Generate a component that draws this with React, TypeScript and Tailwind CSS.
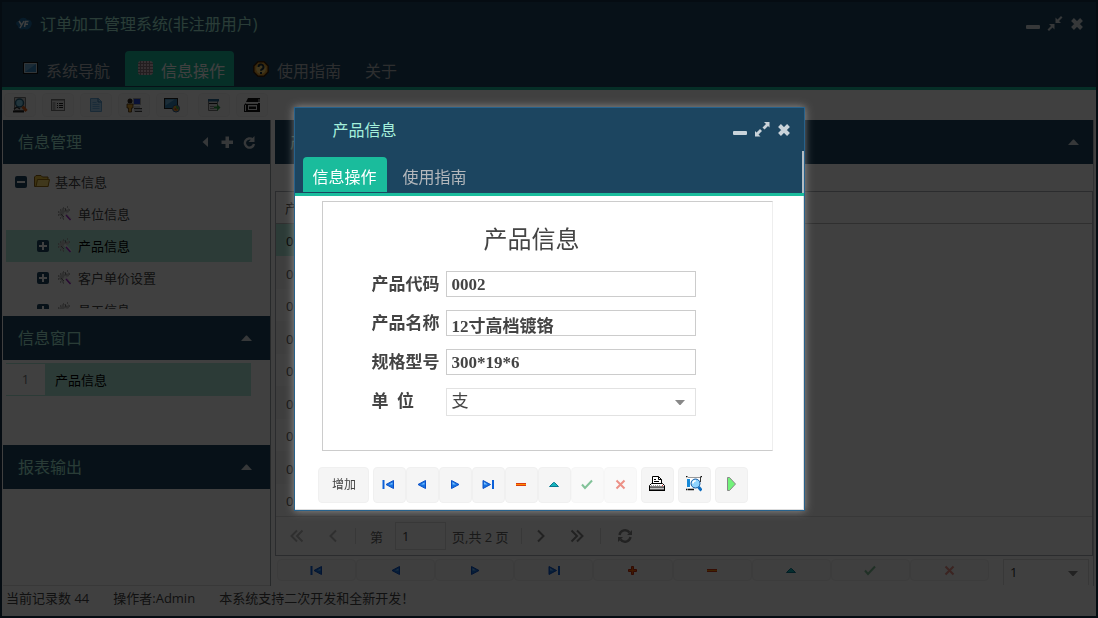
import { useState, type ReactNode } from "react";
import clsx from "clsx";

interface IconProps {
  className?: string;
}

function Svg({ size = 16, className, children }: { size?: number; className?: string; children: ReactNode }) {
  return (
    <svg width={size} height={size} viewBox={`0 0 ${size} ${size}`} fill="none" className={clsx("shrink-0", className)} aria-hidden="true">
      {children}
    </svg>
  );
}

// window controls

const MinusBar = () => (
  <Svg>
    <rect x="1" y="9" width="14" height="4" rx="1" fill="currentColor" />
  </Svg>
);

const Expand = () => (
  <Svg>
    <path d="M10 0h5.500v5.500l-1.500-1.500-3.500 3.500-2-2L12 2zM1 14.500V9l1.500 1.500L6 7l2 2-3.500 3.500L6.500 14.500z" fill="currentColor" />
  </Svg>
);

const Compress = () => (
  <Svg>
    <path d="M8.500 7V1.500L10.500 3.500 14 0l1.500 1.500L12 5l2 2zM7.500 8v5.500L5.500 11.500 2 15 .5 13.500 4 10 2 8z" fill="currentColor" />
  </Svg>
);

const Close = () => (
  <Svg>
    <path d="M3.500 3.500l9 9M12.500 3.500l-9 9" stroke="currentColor" strokeWidth="4" />
  </Svg>
);

const TriangleUp = ({ className }: IconProps) => (
  <svg width="11" height="6" viewBox="0 0 11 6" className={className} aria-hidden="true">
    <path d="M0 6L5 0.5h1L11 6z" fill="currentColor" />
  </svg>
);

const TriangleDown = ({ className }: IconProps) => (
  <svg width="10" height="5" viewBox="0 0 10 5" className={className} aria-hidden="true">
    <path d="M0 0h10L5.500 5h-1z" fill="currentColor" />
  </svg>
);

const TriangleLeft = () => (
  <Svg size={14}>
    <path d="M10 2v10L4.500 7z" fill="currentColor" />
  </Svg>
);

const BoldPlus = () => (
  <Svg size={14}>
    <path d="M5.500 1.500h3.500v4h4v3.500h-4v4H5.500V9h-4V5.500h4z" fill="currentColor" />
  </Svg>
);

const Reload = () => (
  <Svg size={14}>
    <path d="M10.500 4.500A4.600 4.600 0 1 0 12 9" stroke="currentColor" strokeWidth="2.400" />
    <path d="M12.500 1v6h-6z" fill="currentColor" />
  </Svg>
);

const Refresh = () => (
  <Svg>
    <path d="M2.500 7A5.600 5.600 0 0 1 12.500 4.500M13.500 9A5.600 5.600 0 0 1 3.500 11.500" stroke="currentColor" strokeWidth="2.400" />
    <path d="M15 2v5h-5zM1 14V9h5z" fill="currentColor" />
  </Svg>
);

// record navigation

const First = () => (
  <Svg>
    <path d="M12.500 4.500v8L5 8.500z" fill="#1673e0" stroke="#0c50c8" />
    <path d="M1.500 4h2v9h-2z" fill="#0c60d8" />
    <path d="M11.500 6.500v2H8z" fill="#7cc0ff" />
  </Svg>
);

const Prev = () => (
  <Svg>
    <path d="M11.500 4.500v8L4 8.500z" fill="#1673e0" stroke="#0c50c8" />
    <path d="M10.500 6.500v2H7z" fill="#7cc0ff" />
  </Svg>
);

const Next = () => (
  <Svg>
    <path d="M4.500 4.500v8l7.500-4z" fill="#1673e0" stroke="#0c50c8" />
    <path d="M5.500 6v2.500H9z" fill="#7cc0ff" />
  </Svg>
);

const Last = () => (
  <Svg>
    <path d="M3 4.500v8l7.500-4z" fill="#1673e0" stroke="#0c50c8" />
    <path d="M4 6v2.500h3.500z" fill="#7cc0ff" />
    <path d="M12 4h2v9h-2z" fill="#0c60d8" />
  </Svg>
);

const Add = () => (
  <Svg>
    <path d="M6.500 4.500h2v3h3v2h-3v3h-2v-3h-3v-2h3z" fill="#ff6a00" stroke="#c8290c" />
  </Svg>
);

const Remove = () => (
  <Svg>
    <path d="M3 7h10v3H3z" fill="#d83a10" />
    <path d="M3 8h10v1H3z" fill="#ff8a00" />
  </Svg>
);

const Edit = () => (
  <Svg>
    <path d="M3.500 10.500L7.500 6.500h1l4 4z" fill="#16b4bc" stroke="#0a7890" />
  </Svg>
);

const Check = () => (
  <Svg>
    <path d="M3 8.500l3 3.500 7-7.500" stroke="#2f9a55" strokeWidth="2" />
  </Svg>
);

const Cross = () => (
  <Svg>
    <path d="M4.500 4.500l8 8M12.500 4.500l-8 8" stroke="#e04838" strokeWidth="2" />
  </Svg>
);

const Print = ({ className }: IconProps) => (
  <Svg className={className}>
    <path d="M3.500 7V.5h6l3 3V7" fill="#fff" stroke="#000" />
    <path d="M9.500.5v3h3M5 3.500h2M5 5.500h5" stroke="#000" />
    <path d="M2.500 7.500h11l2 2v1.500H.5V9.500z" fill="#fff" stroke="#000" />
    <path d="M0 11h16v4H0z" fill="#000" />
    <path d="M1 12.500h14" stroke="#c4c4c4" strokeWidth="2" />
    <path d="M2 9.500h10" stroke="#999" strokeDasharray="1 1" />
    <path d="M13 9.500h1" stroke="#e33" />
  </Svg>
);

const Preview = ({ className }: IconProps) => (
  <Svg className={className}>
    <path d="M2 1h12v11H2z" fill="#fff" />
    <path d="M2 1h12v1H2z" fill="#999" />
    <path d="M0 .5h1.500M14.500.5H16M0 13.500h1.500M2 13.500h6" stroke="#111" strokeWidth="1.500" />
    <path d="M14.500 1v5" stroke="#333" />
    <path d="M1 3h3v8H1z" fill="#178ad8" />
    <circle cx="9.500" cy="7.500" r="4.500" fill="#8fd4ff" stroke="#1458a0" />
    <path d="M6.800 7.500a3 3 0 0 1 3-2.700" stroke="#fff" strokeWidth="1.600" />
    <path d="M12.500 11l3 3.500" stroke="#0b6cc0" strokeWidth="3" />
  </Svg>
);

const Run = () => (
  <Svg>
    <path d="M4.500 1.500h2l6 6.500-6 6.500h-2z" fill="#72f27a" stroke="#888" />
  </Svg>
);

// toolbar and menu

const Logo = () => (
  <Svg>
    <path d="M2 10c-3-2-2-5 1-5 1-4 7-4 8-1 4-1 6 3 4 6-1 3-4 4-7 3-3 1-6 0-6-3z" fill="#1f6ca4" />
    <path d="M3 5l2.500 4M8 5l-4 7M8.500 11l1-5.500h3M9 8.300h3" stroke="#f2f5f8" strokeWidth="1.500" />
  </Svg>
);

const Monitor = () => (
  <Svg size={15}>
    <rect x="0.500" y="1.500" width="14" height="11" fill="#3a8ac6" stroke="#111" />
    <path d="M2 3h11L2 11z" fill="#6fb0dc" />
    <path d="M1.500 2.500h12v9h-12z" stroke="#c8d8e0" />
  </Svg>
);

const Grid = () => (
  <Svg size={15}>
    <rect width="15" height="14" rx="3" fill="#d8c0c8" />
    <path d="M2.500 0v14M5.500 0v14M8.500 0v14M11.500 0v14M0 2.500h15M0 5.500h15M0 8.500h15M0 11.500h15" stroke="#8a7a80" />
  </Svg>
);

const Help = () => (
  <Svg>
    <path d="M5 .8h6l4.200 4.200v6L11 15.200H5L.8 11V5z" fill="#e8a430" stroke="#38200c" strokeWidth="1.500" />
    <circle cx="8" cy="8" r="4.800" fill="#ffdc78" />
    <path d="M5.500 6a2.500 2.500 0 1 1 3.500 2.300q-1 .4-1 1.400M8 11v2" stroke="#18303c" strokeWidth="2" />
  </Svg>
);

const Find = () => (
  <Svg>
    <path d="M2.500.5h11v13h-11z" fill="#ccc" stroke="#777" />
    <path d="M1 14.500h11" stroke="#222" strokeWidth="2" />
    <path d="M2 12l3-2 3 2" stroke="#333" strokeWidth="1.500" />
    <circle cx="7.500" cy="6" r="4" fill="#88d4ee" stroke="#24607c" strokeWidth="1.500" />
    <path d="M10.500 9.500l4 4.500" stroke="#d85c18" strokeWidth="3" />
  </Svg>
);

const Form = () => (
  <Svg>
    <rect x="1.500" y="2.500" width="13" height="11" fill="#e8e8e8" stroke="#777" />
    <path d="M2 3.500h12" stroke="#aaa" />
    <path d="M4 5v8" stroke="#aaa" strokeWidth="3" />
    <path d="M7 6.500h1M7 8.500h1M7 10.500h1M9 6.500h4M9 8.500h4M9 10.500h4" stroke="#222" />
  </Svg>
);

const Page = () => (
  <Svg>
    <path d="M2.500 1.500h8l3 3v10h-11z" fill="#a4d4f8" stroke="#6aa8d8" />
    <path d="M10 1.500V5h3.500" stroke="#3878b0" />
    <path d="M4.500 5.500h4M4.500 7.500h7M4.500 9.500h7M4.500 11.500h7" stroke="#6cb0e4" />
  </Svg>
);

const Users = () => (
  <Svg>
    <path d="M7.500 1.500h7v6h-7z" fill="#2443d8" stroke="#aaa" />
    <path d="M8 9h6v2H8zM8 12h8v3H8z" fill="#c8ccd4" />
    <path d="M8 11.500h8M9 14.500h7" stroke="#444" />
    <circle cx="4" cy="4" r="2.500" fill="#2e2620" />
    <path d="M1 7h6v4H5.500v4h-3v-4H1z" fill="#e8a832" stroke="#50300c" strokeWidth=".8" />
  </Svg>
);

const Web = () => (
  <Svg>
    <rect x="0.500" y="1.500" width="13" height="10" fill="#3484b8" stroke="#222" />
    <path d="M1.500 2.500h9l-9 6z" fill="#70b4dc" />
    <circle cx="12" cy="11.500" r="3.500" fill="#d8a030" stroke="#245aa0" />
    <path d="M12 8.500a3 3 0 0 1 2.500 4l-2-1z" fill="#38a84c" />
    <path d="M10 12l2-1 1 3z" fill="#cc3838" />
  </Svg>
);

const Export = () => (
  <Svg>
    <path d="M2.500 2.500h9v11h-9z" fill="#e4e4e4" stroke="#777" />
    <path d="M2 2h11v2.500H2z" fill="#2b6a94" />
    <path d="M3 6.500h8" stroke="#222" />
    <path d="M4 9.500h4M4 11.500h4" stroke="#888" />
    <path d="M8 9.500h3V7l3.500 3.500L11 14v-2.500H8z" fill="#2c9a42" />
  </Svg>
);

const Printer = () => (
  <Svg>
    <path d="M4 1h12v4H2z" fill="#111" />
    <path d="M2 6h14v9H0V8z" fill="#111" />
    <path d="M2 6.500h12M1.500 8v6M15 2v3" stroke="#ddd" />
    <path d="M4 8h9v5H4z" fill="#eee" />
    <path d="M5 9.500h7V12H5z" fill="#111" />
  </Svg>
);

const Folder = () => (
  <Svg>
    <path d="M.5 12.500V3L2 1.500h5L8.500 3H14v9.500z" fill="#f2c840" stroke="#8a6010" />
    <path d="M3.500 5.500h12l-1.500 7H2z" fill="#ffe070" stroke="#9a7010" />
  </Svg>
);

const Gear = () => (
  <Svg>
    <path d="M7 3l1 2 1-2 1 1 2-2v4l-2 1-2-1-2 3 1 3-2 1-1-3-3-1 2-2-2-1 3-1 1-3z" fill="#c4c4c4" />
    <path d="M1 6h1M3 4h1M6 2h1M10 1h1M12 4h1M1 9h1M3 12h1M6 13h1" stroke="#999" strokeWidth="1.500" />
    <path d="M4 8l3 3M8 2l1 3" stroke="#777" />
    <path d="M7.500 6.500l6.500 7" stroke="#eee" strokeWidth="2.500" />
    <path d="M9 9l4.500 5" stroke="#a028c8" strokeWidth="1.500" />
  </Svg>
);

const Toggle = ({ open }: { open?: boolean }) => (
  <Svg size={12}>
    <rect width="12" height="12" rx="2" fill="#1c4560" />
    <path d={open ? "M2 6h8" : "M2 6h8M6 2v8"} stroke="#fff" strokeWidth="2" />
  </Svg>
);

const Chevron = ({ double, back }: { double?: boolean; back?: boolean }) => (
  <Svg size={14} className={back ? "rotate-180" : undefined}>
    <path d={double ? "M1.500 1.500L7 7l-5.500 5.500M7 1.500L12.500 7 7 12.500" : "M4 1.500L9.500 7 4 12.500"} stroke="currentColor" strokeWidth="2" />
  </Svg>
);

const menuTabs = [
  { label: "系统导航", icon: <Monitor /> },
  { label: "信息操作", icon: <Grid /> },
  { label: "使用指南", icon: <Help /> },
  { label: "关于" },
];

const tools = [
  { name: "查找", icon: <Find /> },
  { name: "表单", icon: <Form /> },
  { name: "文档", icon: <Page /> },
  { name: "用户", icon: <Users /> },
  { name: "网络", icon: <Web /> },
  { name: "导出", icon: <Export /> },
  { name: "打印", icon: <Printer /> },
];

const treeItems = [
  { label: "单位信息", leaf: true },
  { label: "产品信息" },
  { label: "客户单价设置" },
  { label: "员工信息" },
];

const codes = ["0002", "0003", "0004", "0005", "0006", "0007", "0008", "0009", "0010"];

const gridNav = [
  { name: "首条", icon: <First /> },
  { name: "上一条", icon: <Prev /> },
  { name: "下一条", icon: <Next /> },
  { name: "末条", icon: <Last /> },
  { name: "增加", icon: <Add /> },
  { name: "删除", icon: <Remove /> },
  { name: "编辑", icon: <Edit /> },
  { name: "保存", icon: <Check />, disabled: true },
  { name: "取消", icon: <Cross />, disabled: true },
];

function PanelHeader({ title, children }: { title: string; children: ReactNode }) {
  return (
    <div className="flex h-11 shrink-0 items-center justify-between bg-[#1c4560] pr-3.5 pl-[15px] text-base text-[#a6f0dc]">
      <h2>{title}</h2>
      <div className="flex items-center gap-2 text-[#d5dde2]">{children}</div>
    </div>
  );
}

function Sidebar() {
  const [selected, setSelected] = useState("产品信息");

  return (
    <aside className="flex w-[268px] shrink-0 flex-col border-r border-[#9aa2a8]">
      <PanelHeader title="信息管理">
        <button aria-label="收起"><TriangleLeft /></button>
        <button aria-label="新增"><BoldPlus /></button>
        <button aria-label="刷新"><Reload /></button>
      </PanelHeader>

      <div className="h-[152px] shrink-0 pt-0.5 pr-[18px] pb-[7px] pl-[3px]">
        <ul className="h-full overflow-hidden text-[13px]">
          <li>
            <button className="flex h-8 w-full items-center pl-[9px]">
              <Toggle open />
              <span className="ml-[7px]"><Folder /></span>
              <span className="ml-[5px] pt-0.5">基本信息</span>
            </button>
          </li>
          {treeItems.map((item) => (
            <li key={item.label}>
              <button
                onClick={() => setSelected(item.label)}
                className={clsx(
                  "flex h-8 w-full items-center pl-[31px]",
                  selected === item.label ? "bg-[#b0ecdc] text-black" : "text-[#444]"
                )}
              >
                <span className="w-3">{!item.leaf && <Toggle />}</span>
                <span className="ml-2"><Gear /></span>
                <span className="ml-[5px] pt-0.5">{item.label}</span>
              </button>
            </li>
          ))}
        </ul>
      </div>

      <PanelHeader title="信息窗口">
        <button aria-label="折叠信息窗口" className="mr-1"><TriangleUp /></button>
      </PanelHeader>
      <div className="h-[85px] shrink-0 py-[3px] pr-[19px] pl-[3px]">
        <div className="flex h-[33px] items-center border-y border-[#b0ecdc] text-[13px]">
          <span className="w-[39px] text-center text-[#777]">1</span>
          <button className="h-full flex-1 bg-[#b0ecdc] pt-0.5 pl-2.5 text-left text-black">产品信息</button>
        </div>
      </div>

      <PanelHeader title="报表输出">
        <button aria-label="折叠报表输出" className="mr-1"><TriangleUp /></button>
      </PanelHeader>
      <div className="flex-1 border-b border-[#e0e0e0]" />
    </aside>
  );
}

function Separator() {
  return <span className="block h-4 w-px bg-[#ddd]" />;
}

function ProductGrid() {
  return (
    <main className="ml-1 flex min-w-0 flex-1 flex-col border-r border-[#c4c8cc]">
      <PanelHeader title="产品信息">
        <button aria-label="折叠产品信息"><TriangleUp /></button>
      </PanelHeader>

      <div className="mt-[27px] flex flex-1 flex-col border border-[#aab0b6] text-[13px] text-[#444]">
        <div className="flex h-8 shrink-0 items-center border-b border-[#bbb]">
          <span className="pt-0.5 pl-[9px]">产品代码</span>
        </div>
        <table className="h-[292px] w-[400px]">
          <tbody>
            {codes.map((code, i) => (
              <tr key={code} className={i === 0 ? "bg-[#b0ecdc] text-black" : "even:bg-[#f8f8f8]"}>
                <td className="pt-1 pl-2.5">{code}</td>
              </tr>
            ))}
          </tbody>
        </table>
        <div className="flex flex-1 items-center border-t border-[#ddd] pl-3.5 text-[#888]">
          <button aria-label="第一页" className="text-[#bbb]"><Chevron double back /></button>
          <button aria-label="上一页" className="ml-[22px] text-[#bbb]"><Chevron back /></button>
          <span className="ml-[15px]"><Separator /></span>
          <label htmlFor="page" className="ml-3.5 pt-1 text-[#666]">第</label>
          <input id="page" defaultValue="1" className="ml-3 h-7 w-[51px] border border-[#ddd] px-1.5 text-[#444]" />
          <span className="ml-1.5 pt-1 text-[#666]">页,共 2 页</span>
          <span className="mx-3"><Separator /></span>
          <button aria-label="下一页"><Chevron /></button>
          <button aria-label="最后一页" className="ml-[22px]"><Chevron double /></button>
          <span className="mx-4"><Separator /></span>
          <button aria-label="刷新"><Refresh /></button>
        </div>
      </div>

      <div className="flex h-[30px] shrink-0 items-start pt-[3px] pr-1 pl-[2px]">
        {gridNav.map((b) => (
          <button
            key={b.name}
            aria-label={b.name}
            className="flex h-[22px] flex-1 items-center justify-center rounded border border-[#f0f0f0] bg-[#f9f9f9]"
          >
            <span className={b.disabled ? "opacity-60" : undefined}>{b.icon}</span>
          </button>
        ))}
        <div className="relative ml-3.5 w-[86px]">
          <select aria-label="每页" className="h-[26px] w-full appearance-none border-x border-t border-[#ddd] px-1.5 text-[13px] text-[#333]">
            <option>1</option>
          </select>
          <TriangleDown className="pointer-events-none absolute top-3 right-[11px] text-[#888]" />
        </div>
      </div>
    </main>
  );
}

function ActionButton({ name, disabled, children }: { name: string; disabled?: boolean; children: ReactNode }) {
  return (
    <button
      aria-label={name}
      disabled={disabled}
      className={clsx(
        "flex h-9 w-[33px] items-center justify-center rounded border border-[#f0f0f0] bg-[#f5f5f5] pb-0.5",
        disabled && "opacity-60"
      )}
    >
      {children}
    </button>
  );
}

const fields = [
  { id: "code", label: "产品代码", value: "0002" },
  { id: "name", label: "产品名称", value: "12寸高档镀铬" },
  { id: "spec", label: "规格型号", value: "300*19*6" },
];

function ProductDialog() {
  const [tab, setTab] = useState("信息操作");

  return (
    <div
      role="dialog"
      aria-labelledby="dialog-title"
      className="w-[511px] border border-[#27628c] bg-white shadow-[0_0_8px_rgba(200,200,200,0.6)]"
    >
      <header className="border-b-[3px] border-[#1abc9c] bg-[#1c4560]">
        <div className="flex h-[43px] items-center justify-between pr-[12px] pl-[38px]">
          <h1 id="dialog-title" className="text-base text-[#a6f0dc]">产品信息</h1>
          <div className="flex gap-1.5 text-[#c9d3da]">
            <button aria-label="最小化"><MinusBar /></button>
            <button aria-label="最大化"><Expand /></button>
            <button aria-label="关闭"><Close /></button>
          </div>
        </div>
        <nav className="flex h-[42px] items-end gap-1.5 border-r-2 border-[#b4bcc2] px-2 pb-px text-base">
          {["信息操作", "使用指南"].map((t) => (
            <button
              key={t}
              onClick={() => setTab(t)}
              className={clsx("h-[35px] rounded-t px-2.5 pt-1", tab === t ? "bg-[#1abc9c] text-white" : "text-[#b4b8bc]")}
            >
              {t}
            </button>
          ))}
        </nav>
      </header>

      <div className="border-r border-b border-[#ddd] px-[23px] pt-[5px] pb-[6px]">
        <form className="ml-1 h-[250px] w-[451px] border border-[#ccc] border-r-[#eee] pt-5 pl-[49px] font-['Liberation_Serif','Noto_Sans_CJK_SC',serif] text-[17px] text-[#444]">
          <h2 className="mb-[13px] w-80 text-center text-2xl leading-9">产品信息</h2>
          <div className="flex flex-col gap-[13px]">
            {fields.map((f) => (
              <div key={f.id} className="flex h-[26px] items-center font-bold">
                <label htmlFor={f.id} className="w-[74px] pt-0.5">{f.label}</label>
                <input id={f.id} defaultValue={f.value} className="h-full w-[250px] border border-[#ccc] px-[5px] pt-0.5" />
              </div>
            ))}
            <div className="flex h-7 items-center">
              <label htmlFor="unit" className="w-[74px] font-bold whitespace-pre">单  位</label>
              <div className="relative h-full w-[250px]">
                <select id="unit" className="h-full w-full appearance-none border border-[#e2e2e2] px-[5px]">
                  <option>支</option>
                </select>
                <TriangleDown className="pointer-events-none absolute top-3 right-[11px] text-[#888]" />
              </div>
            </div>
          </div>
        </form>

        <div className="mt-4 flex gap-1">
          <button className="h-9 w-[51px] rounded border border-[#f0f0f0] bg-[#f5f5f5] pl-0.5 text-xs text-[#444]">增加</button>
          <div className="flex">
            <ActionButton name="首条"><First /></ActionButton>
            <ActionButton name="上一条"><Prev /></ActionButton>
            <ActionButton name="下一条"><Next /></ActionButton>
            <ActionButton name="末条"><Last /></ActionButton>
            <ActionButton name="删除"><Remove /></ActionButton>
            <ActionButton name="编辑"><Edit /></ActionButton>
            <ActionButton name="保存" disabled><Check /></ActionButton>
            <ActionButton name="取消" disabled><Cross /></ActionButton>
          </div>
          <ActionButton name="打印"><Print /></ActionButton>
          <ActionButton name="预览"><Preview /></ActionButton>
          <ActionButton name="执行"><Run /></ActionButton>
        </div>
      </div>
    </div>
  );
}

export default function App() {
  return (
    <div className="flex min-h-screen flex-col border-2 border-[#14304a] bg-white font-['Open_Sans','Noto_Sans_CJK_SC',sans-serif] text-[#444]">
      <header className="border-b-[3px] border-[#1abc9c] bg-[#1c4560] text-base">
        <div className="flex h-[43px] items-center pr-[11px] pl-3.5">
          <Logo />
          <h1 className="ml-2 flex-1 text-[#a6f0dc]">订单加工管理系统(非注册用户)</h1>
          <div className="flex gap-1.5 text-[#d5dde2]">
            <button aria-label="最小化"><MinusBar /></button>
            <button aria-label="还原"><Compress /></button>
            <button aria-label="关闭"><Close /></button>
          </div>
        </div>
        <nav className="flex h-[42px] items-end gap-1.5 px-2 pb-px">
          {menuTabs.map((t, i) => (
            <button
              key={t.label}
              className={clsx(
                "flex h-[35px] items-center gap-2 rounded-t pr-[9px]",
                t.icon ? "pl-[13px]" : "pl-[9px]",
                i === 1 ? "bg-[#1abc9c] text-white" : "text-[#b4b8bc]"
              )}
            >
              {t.icon}
              <span className="pt-1">{t.label}</span>
            </button>
          ))}
        </nav>
      </header>

      <div className="flex h-[30px] items-center gap-1.5 px-0.5">
        {tools.map((t, i) => (
          <button
            key={t.name}
            aria-label={t.name}
            className={clsx("flex h-6 w-8 items-center justify-center rounded border border-[#f4f4f4] bg-[#fafafa]", i === 5 && "ml-1")}
          >
            {t.icon}
          </button>
        ))}
      </div>

      <div className="flex flex-1 pr-0.5 pl-px">
        <Sidebar />
        <ProductGrid />
      </div>

      <footer className="flex h-[30px] items-start gap-6 px-1 pt-[3px] text-[13px]">
        <span>当前记录数 44</span>
        <span>操作者:Admin</span>
        <span>本系统支持二次开发和全新开发！</span>
      </footer>

      <div className="fixed inset-0 flex items-center justify-center bg-black/75">
        <ProductDialog />
      </div>
    </div>
  );
}
